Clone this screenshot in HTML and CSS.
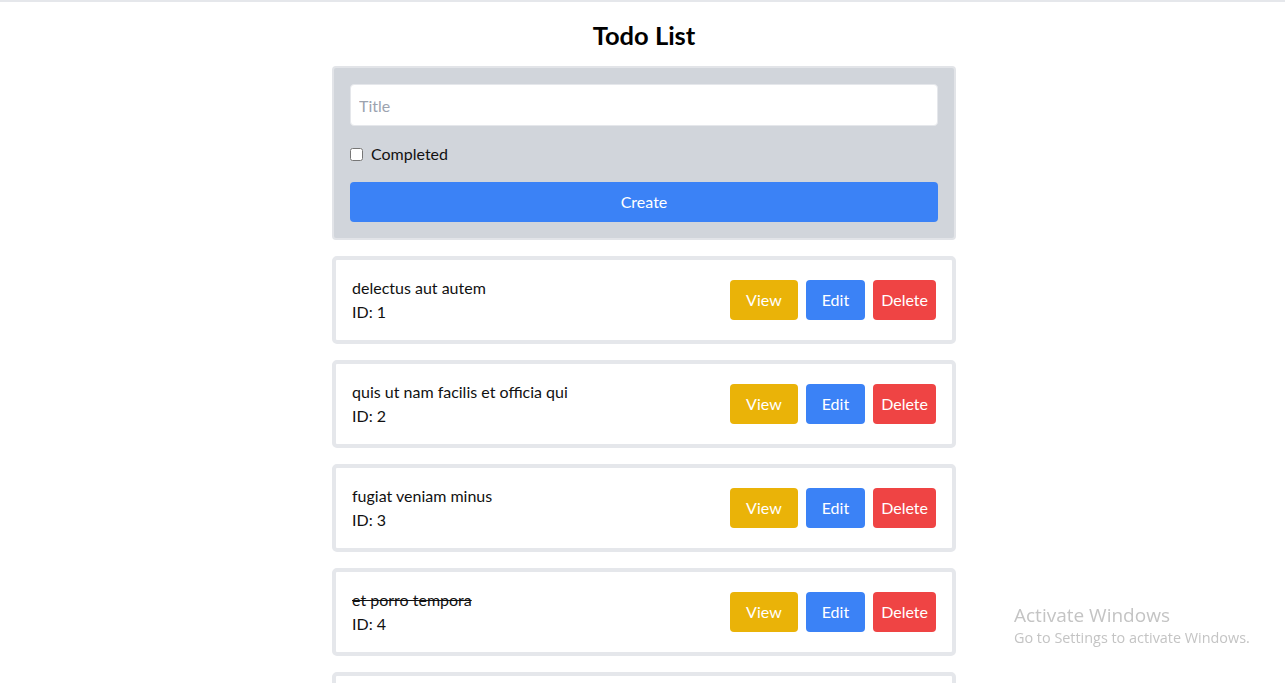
FILE: index.html
```html
<!DOCTYPE html>
<html lang="en">
<head>
<meta charset="utf-8">
<title>Todo List</title>
<link rel="stylesheet" href="styles.css">
</head>
<body>
<div class="app">
  <h1 class="title">Todo List</h1>
  <form class="create-form">
    <input class="title-input" type="text" placeholder="Title">
    <label class="check-row"><input class="check" type="checkbox"><span>Completed</span></label>
    <button class="btn btn-create" type="button">Create</button>
  </form>
  <ul class="todo-list">
    <li class="todo">
      <div class="todo-info"><div class="todo-title">delectus aut autem</div><div>ID: 1</div></div>
      <div class="actions"><button class="btn btn-view">View</button><button class="btn btn-edit">Edit</button><button class="btn btn-delete">Delete</button></div>
    </li>
    <li class="todo">
      <div class="todo-info"><div class="todo-title">quis ut nam facilis et officia qui</div><div>ID: 2</div></div>
      <div class="actions"><button class="btn btn-view">View</button><button class="btn btn-edit">Edit</button><button class="btn btn-delete">Delete</button></div>
    </li>
    <li class="todo">
      <div class="todo-info"><div class="todo-title">fugiat veniam minus</div><div>ID: 3</div></div>
      <div class="actions"><button class="btn btn-view">View</button><button class="btn btn-edit">Edit</button><button class="btn btn-delete">Delete</button></div>
    </li>
    <li class="todo">
      <div class="todo-info"><div class="todo-title done">et porro tempora</div><div>ID: 4</div></div>
      <div class="actions"><button class="btn btn-view">View</button><button class="btn btn-edit">Edit</button><button class="btn btn-delete">Delete</button></div>
    </li>
    <li class="todo">
      <div class="todo-info"><div class="todo-title">laboriosam mollitia et enim quasi adipisci quia provident illum</div><div>ID: 5</div></div>
      <div class="actions"><button class="btn btn-view">View</button><button class="btn btn-edit">Edit</button><button class="btn btn-delete">Delete</button></div>
    </li>
  </ul>
</div>
<div class="watermark">
  <div class="wm-title">Activate Windows</div>
  <div class="wm-sub">Go to Settings to activate Windows.</div>
</div>
</body>
</html>
```
FILE: styles.css
```css
* { box-sizing: border-box; }
html, body { margin: 0; padding: 0; background: #fff; }
body {
  font-family: "Lato", "Noto Sans", sans-serif;
  font-size: 16px;
  line-height: 24px;
  color: #111;
  border-top: 2px solid #e5e7eb;
  padding-left: 3px;
}
.app {
  width: 624px;
  margin: 0 auto;
  padding-top: 17px;
}
.title {
  margin: 0 0 15px;
  font-size: 25.5px;
  line-height: 32px;
  font-weight: 700;
  text-align: center;
  color: #000;
}
.create-form {
  display: flex;
  flex-direction: column;
  gap: 16px;
  background: #d1d5db;
  border: 2px solid #e2e4e8;
  border-radius: 4px;
  padding: 16px;
}
.title-input {
  font: inherit;
  height: 42px;
  padding: 8px;
  border: 1px solid #e5e7eb;
  border-radius: 4px;
  background: #fff;
  outline: none;
}
.title-input::placeholder { color: #9ca3af; }
.check-row {
  display: flex;
  align-items: center;
  gap: 8px;
  height: 24px;
}
.check { margin: 0; width: 13px; height: 13px; }
.btn {
  font: inherit;
  border: 0;
  border-radius: 4px;
  color: #fff;
  padding: 8px 16px;
  line-height: 24px;
  cursor: pointer;
}
.btn-create { background: #3b82f6; width: 100%; }
.btn-view { background: #eab308; }
.btn-edit { background: #3b82f6; }
.btn-delete { background: #ef4444; padding: 8px; }
.todo-list {
  list-style: none;
  margin: 16px 0 0;
  padding: 0;
  display: flex;
  flex-direction: column;
  gap: 16px;
}
.todo {
  display: flex;
  align-items: center;
  justify-content: space-between;
  border: 4px solid #e5e7eb;
  border-radius: 5px;
  padding: 16px;
}
.actions { display: flex; gap: 8px; }
.done { text-decoration: line-through; }
.watermark {
  position: fixed;
  left: 1014px;
  top: 602px;
  color: #c4c4c4;
  font-family: "Open Sans", "Noto Sans", sans-serif;
  pointer-events: none;
}
.wm-title { font-size: 19px; line-height: 26px; }
.wm-sub { font-size: 14.4px; line-height: 20px; }
```
